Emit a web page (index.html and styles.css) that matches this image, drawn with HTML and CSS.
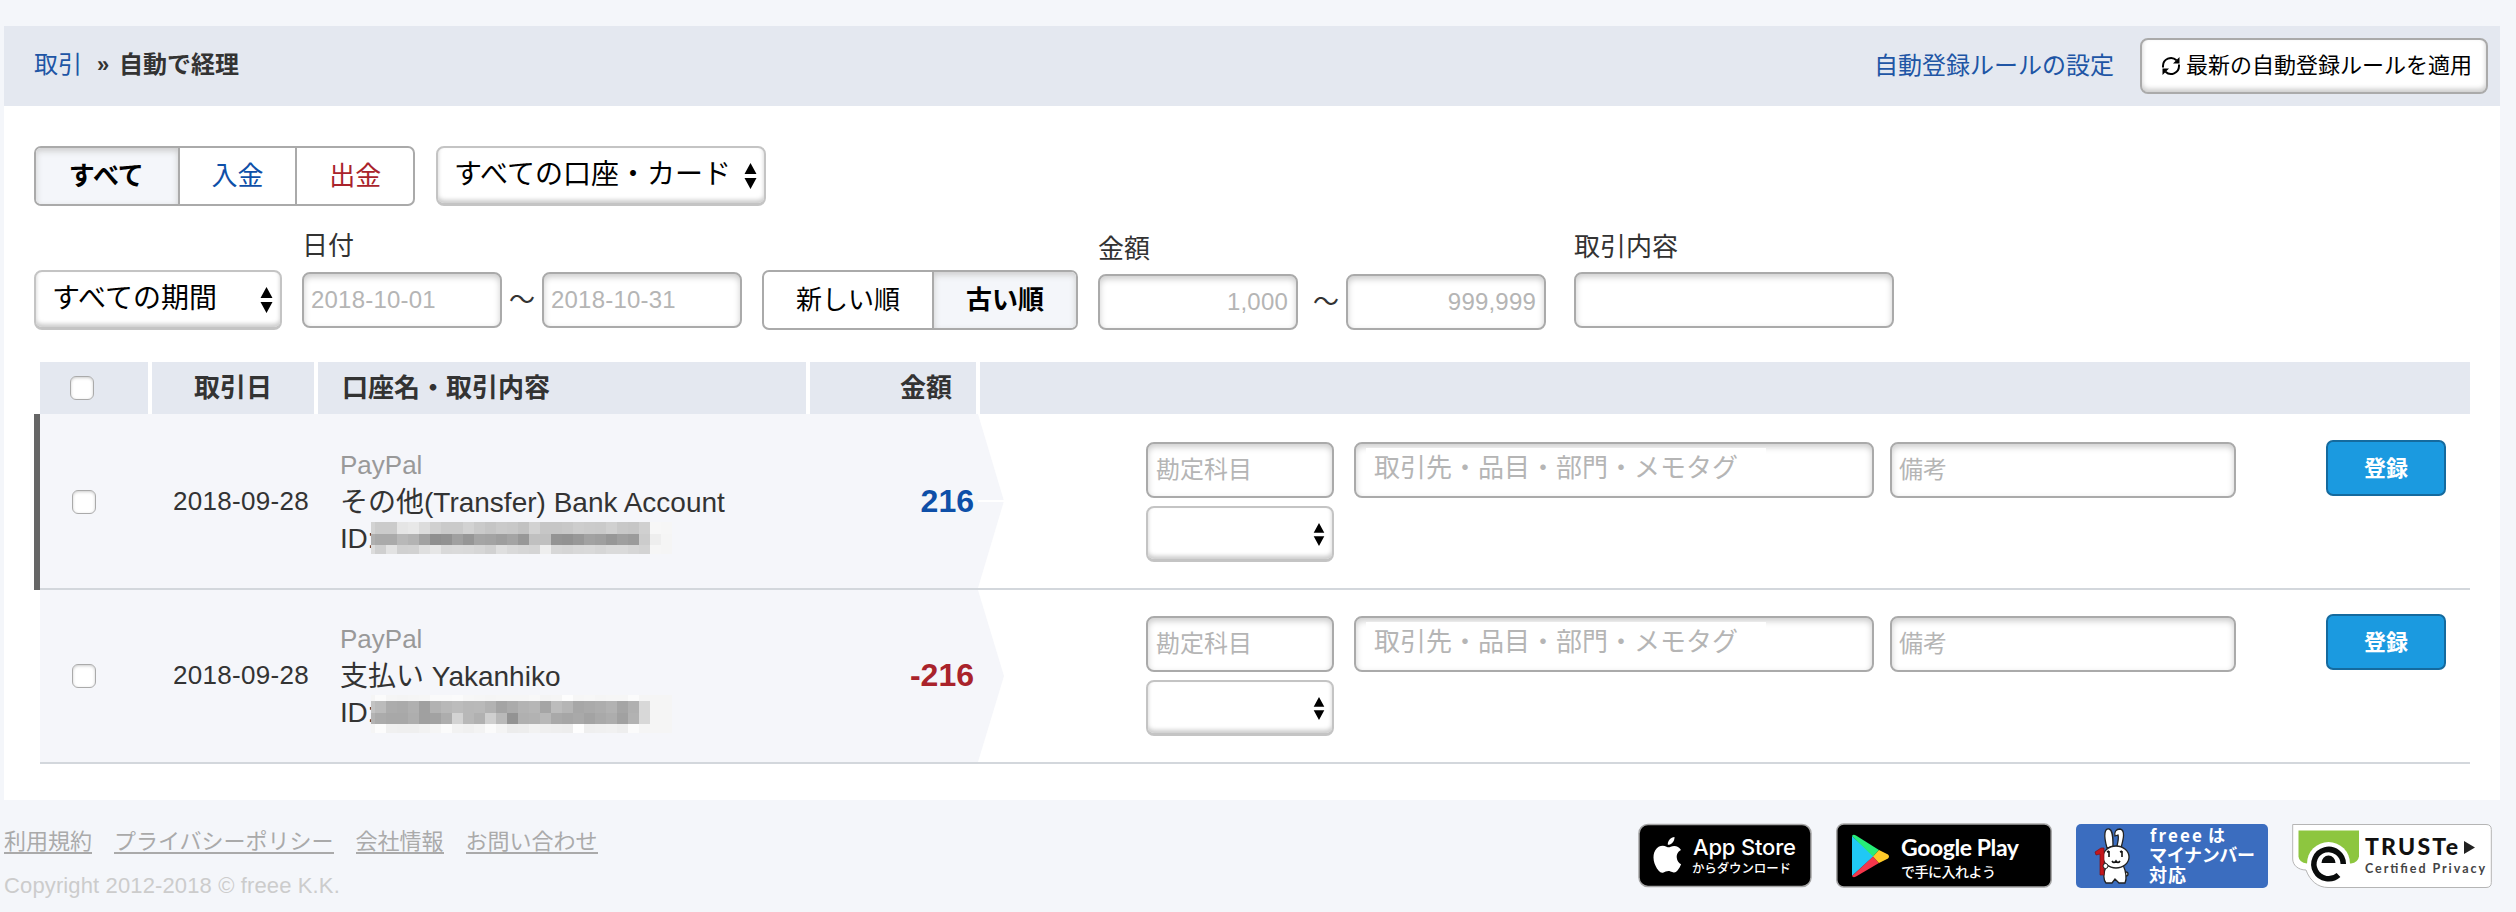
FILE: index.html
```html
<!DOCTYPE html>
<html lang="ja">
<head>
<meta charset="utf-8">
<title>自動で経理</title>
<link rel="stylesheet" href="styles.css">
</head>
<body>
<main class="panel">
  <header class="bar">
    <nav class="crumbs"><a href="#">取引</a><span class="sep">»</span><h1>自動で経理</h1></nav>
    <a class="rules" href="#">自動登録ルールの設定</a>
    <button class="apply"><svg class="reload" viewBox="0 0 20 20"><path d="M2 11.500V10A8 8 0 0 1 15.500 4.200M18 8.500V10A8 8 0 0 1 4.500 15.800" fill="none" stroke="#000" stroke-width="2"/><path d="M18.500 1v6.500H12zM1.500 19v-6.500H8z"/></svg>最新の自動登録ルールを適用</button>
  </header>

  <section class="filters first">
    <div class="seg kinds"><button class="on">すべて</button><button class="in">入金</button><button class="out">出金</button></div>
    <div class="select accounts"><span>すべての口座・カード</span><svg class="updown" viewBox="0 0 12 26"><path d="M6 0l6 11H0zM6 26l6-11H0z"/></svg></div>
  </section>

  <section class="filters second">
    <div class="select period"><span>すべての期間</span><svg class="updown" viewBox="0 0 12 26"><path d="M6 0l6 11H0zM6 26l6-11H0z"/></svg></div>
    <div class="group dates"><label>日付</label>
      <div class="range"><div class="field">2018-10-01</div><span class="tilde">〜</span><div class="field">2018-10-31</div></div>
    </div>
    <div class="seg order"><button>新しい順</button><button class="on">古い順</button></div>
    <div class="group amounts"><label>金額</label>
      <div class="range"><div class="field num">1,000</div><span class="tilde">〜</span><div class="field num">999,999</div></div>
    </div>
    <div class="group detail"><label>取引内容</label><div class="field"></div></div>
  </section>

  <section class="table">
    <div class="head">
      <div><i class="check"></i></div><div class="c">取引日</div><div class="l">口座名・取引内容</div><div class="r">金額</div><div></div>
    </div>
    <div class="row current">
      <div class="pick"><i class="check"></i></div>
      <div class="date">2018-09-28</div>
      <div class="desc"><span class="src">PayPal</span><span>その他(Transfer) Bank Account</span><span class="id"><b>ID:</b><span class="mosaic m1"></span></span></div>
      <div class="sum plus">216</div>
      <svg class="arrow" viewBox="0 0 28 174" preserveAspectRatio="none"><path d="M0 0h2l26 87-26 87H0z" fill="#f5f6fa"/><path d="M2 86h26v2H2z" fill="#fff"/></svg>
      <div class="entry">
        <div class="stack"><div class="field">勘定科目</div><div class="select small"><svg class="updown" viewBox="0 0 12 26"><path d="M6 0l6 11H0zM6 26l6-11H0z"/></svg></div></div>
        <div class="field tags"><span>取引先・品目・部門・メモタグ</span></div>
        <div class="field memo">備考</div>
      </div>
      <div class="act"><button class="submit">登録</button></div>
    </div>
    <div class="row next">
      <div class="pick"><i class="check"></i></div>
      <div class="date">2018-09-28</div>
      <div class="desc"><span class="src">PayPal</span><span>支払い Yakanhiko</span><span class="id"><b>ID:</b><span class="mosaic m2"></span></span></div>
      <div class="sum minus">-216</div>
      <svg class="arrow" viewBox="0 0 28 174" preserveAspectRatio="none"><path d="M0 0h2l26 87-26 87H0z" fill="#f5f6fa"/></svg>
      <div class="entry">
        <div class="stack"><div class="field">勘定科目</div><div class="select small"><svg class="updown" viewBox="0 0 12 26"><path d="M6 0l6 11H0zM6 26l6-11H0z"/></svg></div></div>
        <div class="field tags"><span>取引先・品目・部門・メモタグ</span></div>
        <div class="field memo">備考</div>
      </div>
      <div class="act"><button class="submit">登録</button></div>
    </div>
  </section>
</main>

<footer class="foot">
  <div class="legal">
    <nav><a href="#">利用規約</a><a href="#">プライバシーポリシー</a><a href="#">会社情報</a><a href="#">お問い合わせ</a></nav>
    <p>Copyright 2012-2018 © freee K.K.</p>
  </div>
  <div class="badges">
    <svg class="apple" width="174" height="66" viewBox="0 0 174 66">
      <rect x="1" y="1.500" width="172" height="62" rx="9" fill="#000" stroke="#a6a6a6" stroke-width="1.500"/>
      <path d="M43 27C39.500 29 38.500 31.500 38.800 35c.3 3 2 5 4.300 6.200-.8 2.300-2 4.500-3.600 6.400-1.400 1.700-2.800 2.200-4.600 1.700l-2.400-.9c-1.700-.5-3.200-.4-4.800.2l-2.200.9c-2 .6-3.400-.2-4.800-1.800-5-5.800-6.900-15-3.400-20.500 2.700-4.200 7.300-5.300 11.200-3.500 1.600.7 2.700.7 4.200 0 3.900-1.700 8-.500 10.300 3.300z" fill="#fff"/>
      <path d="M36.500 14c.3 4.200-3 7.800-6.700 7.800C29.300 17.800 32.800 14.400 36.500 14z" fill="#fff"/>
      <text x="55" y="31.500" font-size="22" textLength="103" class="inter">App Store</text>
      <text x="54" y="49.500" font-size="12.500" textLength="99" class="cjk">からダウンロード</text>
    </svg>
    <svg class="play" width="216" height="66" viewBox="0 0 216 66">
      <rect x=".8" y="1" width="214.400" height="63" rx="7" fill="#000" stroke="#a6a6a6" stroke-width="1.500"/>
      <path d="M16 13v40l22-20z" fill="#20c8f5"/><path d="M16 13q1-2 4-.5L43 27l-6 6.500z" fill="#27ee78"/><path d="M16 53q1 2 4 .5L43 40l-6-6.500z" fill="#f5364b"/><path d="M43 27l9 4.500q2 2 0 4L43 40l-6-6.500z" fill="#ffc928"/>
      <text x="65" y="32.500" font-size="23" textLength="118" class="lato">Google Play</text>
      <text x="65" y="53.500" font-size="14" textLength="95" class="cjk">で手に入れよう</text>
    </svg>
    <svg class="mynum" width="192" height="66" viewBox="0 0 192 66">
      <rect y="1" width="192" height="64" rx="5" fill="#3b6dbf"/>
      <g fill="#fff" stroke="#222" stroke-width="1.300">
        <path d="M31 25C27 11 29 5 33 6s4 9 4 17zM41 23c1-4 2-8 1-11l-3 1c-1-4 1-7 5-7 6 1 3 11 1 19z"/>
        <circle cx="50" cy="51" r="2"/>
        <path d="M31 42c-5 9-3 16-1 18h6l3-4 4 4h6c2-4 1-12-2-18z"/>
        <ellipse cx="40" cy="34" rx="13" ry="11"/>
      </g>
      <path d="M19 29l6-4h3v27h-4V31l-4 1z" fill="#c4161c" stroke="#7c1015" stroke-width=".7"/>
      <path d="M33 28v6M31 29l2-1M46 28v6M44 29l2-1M36 38q2 3 4 0 2 3 4 0" stroke="#111" stroke-width="1.600" fill="none"/>
      <circle cx="29.500" cy="43" r="2.500" fill="#fff" stroke="#222"/>
      <text x="74" y="18.500" font-size="17" textLength="52" class="cjk mid">freee</text><text x="132" y="18.500" font-size="17" class="cjk mid">は</text>
      <text x="73" y="38.500" font-size="18" textLength="106" class="cjk mid">マイナンバー</text>
      <text x="73" y="59" font-size="18" textLength="37" class="cjk mid">対応</text>
    </svg>
    <svg class="truste" width="200" height="66" viewBox="0 0 200 66">
      <path d="M.7 1.500H194q5.300 0 5.300 5v53q0 5-5.300 5H36C26 64.500 18 58 14 47 6 47 .7 42 .7 36z" fill="#fff" stroke="#b5b5b5"/>
      <path d="M6.500 7.500h60.500v26q-1 6-8 7H15q-8-1-8.500-7z" fill="#8dc63f"/>
      <circle cx="36.500" cy="40.500" r="21.500" fill="#fff"/>
      <path d="M51.300 41A14.700 14.700 0 1 0 46.500 52" fill="none" stroke="#0a0c0c" stroke-width="5.500"/>
      <path d="M29.500 40a7 7.500 0 0 1 14 0z" fill="#0a0c0c"/>
      <text x="73" y="32" font-size="23" textLength="93" class="tr">TRUSTe</text>
      <path d="M172 18l11 6.500-11 6.500z" fill="#222"/>
      <text x="73" y="49.500" font-size="12.500" textLength="120" class="cp">Certified Privacy</text>
    </svg>
  </div>
</footer>
<script src="mosaic.js"></script>
</body>
</html>
```

FILE: styles.css
```css
* { box-sizing: border-box; }
body { margin: 0; padding: 26px 16px 0 4px; background: #f4f6fa; color: #333; font: 26px/36px "Liberation Sans", "Noto Sans CJK JP", sans-serif; }
a { color: #2055a5; text-decoration: none; }
button { font: inherit; padding: 0; margin: 0; border: 0; background: none; }
.panel { height: 774px; background: #fff; }
.bar { height: 80px; background: #e4e8f0; display: flex; align-items: center; padding: 0 12px 0 30px; font-size: 24px; }
.crumbs { display: flex; align-items: center; flex: 1; padding-bottom: 2px; }
.sep { width: 37px; padding-left: 15px; font-weight: bold; font-size: 22px; }
h1 { margin: 0; font-size: 24px; font-weight: bold; }
.rules { margin-right: 26px; padding-bottom: 1px; }
.apply { width: 348px; height: 56px; border: 2px solid #aaa; border-radius: 8px; background: #fff; box-shadow: inset 0 -3px 5px #ccc; font-size: 22px; color: #000; display: flex; align-items: center; padding: 0 0 1px 19px; white-space: nowrap; }
.reload { width: 20px; height: 20px; margin: 1px 5px 0 0; }

.filters { display: flex; padding-left: 30px; }
.first { padding-top: 40px; gap: 21px; }
.second { height: 116px; margin-top: 8px; align-items: flex-end; }
.seg { display: flex; height: 60px; border: 2px solid #aaa; border-radius: 7px; overflow: hidden; color: #000; }
.seg button { color: #000; padding-bottom: 0; }
.seg button + button { border-left: 2px solid #aaa; }
.seg .on { background: #f4f6fa; font-weight: bold; box-shadow: inset 0 3px 6px #ccc; }
.kinds { width: 381px; }
.kinds button { width: 118px; }
.kinds .on { width: 142px; padding-right: 1px; }
.kinds .in { color: #0e4fa8; }
.kinds .out { color: #a9232b; }
.order { width: 316px; margin: 0 20px; }
.order button { width: 168px; }
.order .on { width: 144px; }
.select { height: 60px; border: 2px solid #c4c4c4; border-bottom-width: 3px; border-radius: 8px; background: #fff; box-shadow: inset 0 -3px 4px #ccc; color: #000; font-size: 28px; display: flex; justify-content: space-between; align-items: center; padding: 0 7px 0 16px; white-space: nowrap; }
.select span { padding-bottom: 2px; }
.updown { width: 13px; height: 26px; }
.accounts { width: 330px; }
.period { width: 248px; margin-right: 20px; }
.group label { display: block; height: 36px; }
.dates { padding-bottom: 2px; }
.dates label, .detail label { margin-bottom: 8px; padding-left: 0; }
.detail label { position: relative; top: 1px; }
.amounts label { margin-bottom: 7px; }
.detail { padding-bottom: 2px; margin-left: 28px; }
.range { display: flex; align-items: center; }
.tilde { width: 40px; text-align: center; padding-left: 0; }
.amounts .tilde { width: 48px; padding-left: 8px; }
.field { width: 200px; height: 56px; border: 2px solid #aaa; border-radius: 8px; background: #fff; box-shadow: inset 0 3px 6px #ccc; color: #b5b5b5; font-size: 24px; line-height: 51px; padding: 0 8px 0 7px; letter-spacing: .2px; white-space: nowrap; }
.num { text-align: right; }
.detail .field { width: 320px; }

.table { padding: 32px 30px 0 30px; }
.head { display: grid; grid-template-columns: 108px 162px 488px 166px 1490px; gap: 4px; margin-left: 6px; height: 52px; font-weight: bold; line-height: 52px; }
.head > div { background: #e4e8f0; }
.head .c { text-align: center; }
.head .l { padding-left: 24px; }
.head .r { text-align: right; padding-right: 24px; }
.check { display: block; width: 24px; height: 24px; border: 1.500px solid #aaa; border-radius: 6px; background: #fff; box-shadow: inset 0 1px 3px #ccc; }
.head .check { margin: 14px 0 0 30px; }
.row { height: 174px; display: flex; border-left: 6px solid #fff; }
.row > * { flex: none; border-bottom: 2px solid #d3d7dc; }
.row.current { height: 176px; border-left-color: #666; }
.pick, .date, .desc, .sum { background: #f5f6fa; }
.pick { width: 133px; padding: 76px 0 0 32px; }
.date { width: 167px; padding-top: 69px; letter-spacing: .3px; }
.desc { width: 480px; padding-top: 33px; font-size: 28px; }
.desc > span { display: block; height: 36.500px; line-height: 37px; white-space: nowrap; }
.desc .src { color: #999; font-size: 26px; line-height: 36px; }
.desc .id { display: flex; }
.id b { width: 31px; font-weight: normal; letter-spacing: -.3px; }
.mosaic { position: relative; display: grid; grid-template-columns: 4px repeat(27, 11px); margin-top: 2px; }
.m1 { grid-template-rows: 12px 11px 9px; }
.m2 { margin-top: 1px; grid-template-rows: 6px 12px 11px 9px; }
.sum { width: 156px; text-align: right; font-size: 32px; font-weight: bold; padding-top: 69px; padding-right: 2px; }
.plus { color: #0e4fa8; }
.minus { color: #a9232b; }
.arrow { width: 28px; height: 100%; }
.entry { width: 1322px; display: flex; align-items: flex-start; padding: 28px 0 0 142px; }
.stack { width: 208px; }
.stack .field { width: 188px; margin-bottom: 8px; letter-spacing: 0; padding-left: 8px; }
.small { width: 188px; height: 56px; padding: 0 7px 0 0; justify-content: flex-end; }
.small .updown { height: 23px; width: 12px; margin-top: 1px; }
.field.tags { width: 520px; font-size: 26px; padding: 0 10px; letter-spacing: 0; margin-right: 16px; }
.tags span { display: block; width: 400px; height: 38px; margin-top: 4px; line-height: 41px; background: #fff; padding-left: 8px; }
.memo { width: 346px; letter-spacing: 0; }
.act { width: 144px; padding-top: 26px; }
.submit { display: block; width: 120px; height: 56px; padding-top: 2px; border: 2px solid #156a9e; border-radius: 7px; background: #1b9ae0; color: #fff; font-weight: bold; font-size: 22px; }
.next .pick { padding-top: 74px; }
.next .date, .next .sum { padding-top: 67px; }
.next .desc { padding-top: 31px; }
.next .entry { padding-top: 26px; }
.next .act { padding-top: 24px; }

.foot { display: flex; justify-content: space-between; padding-right: 8px; }
.legal { padding-top: 26px; font-size: 22px; line-height: 31px; }
.legal nav { display: flex; gap: 22px; }
.legal a { color: #aaa; height: 28px; border-bottom: 2px solid #aaa; }
.legal p { margin: 16px 0 0; color: #ccc; letter-spacing: .13px; }
.badges { display: flex; padding-top: 23px; }
.play { margin-left: 24px; }
.mynum, .truste { margin-left: 24px; }
.badges text { fill: #fff; }
.inter { font-family: Inter, sans-serif; font-weight: 500; }
.lato { font-family: Lato, sans-serif; font-weight: 700; }
.cjk { font-family: "Noto Sans CJK JP", sans-serif; font-weight: 500; }
.cjk.mid { font-weight: 700; }
.badges .tr { font-family: Lato, sans-serif; font-weight: 900; fill: #111; }
.badges .cp { font-family: Lato, sans-serif; font-weight: 700; fill: #444; }
```

FILE: mosaic.js
```js
// Fills the masked account IDs with grey blocks, one hex digit pair per block.
const masks = {
  m1: [
    "d3cbcbe5e8dcd0cacad2cac5cac8c2d2c6c6c8cdcbcad0c8c6d0f7f6",
    "b0aaaab8b3a28f92a096a5a39ea498c0c0949298a29f979f9bcceef5",
    "dccfe2d0d1dfe6d9dad9d6d1dfd9d6d4eed7d5d8d9d6dadad6d3f6f5"
  ],
  m2: [
    "f5fbf5f4f5f6fafafbf7f6f5f6f6f6f8f4f5fdf6f7f5f6f6fbf5f5f5",
    "c3bbacaab0a0b2b8bcb8b9b2a4abb3b6a5bcb5a7aaadb2a5b0d8f5f5",
    "b3aba8a8aea0a2add3b8b1cfb993b0b2b8a9a6a9a3a9ada1b2d8f5f5",
    "f5fcf0efeff2f5fbf2f0f3fbf4ecedf2efeeedfeeff0f1eefbf5f5f5"
  ]
};
for (const [name, rows] of Object.entries(masks)) {
  const box = document.querySelector("." + name);
  for (const row of rows) {
    for (let c = 0; c < 28; c++) {
      const v = row.slice(c * 2, c * 2 + 2);
      const cell = document.createElement("i");
      cell.style.background = "#" + v + v + v;
      box.append(cell);
    }
  }
}
```
